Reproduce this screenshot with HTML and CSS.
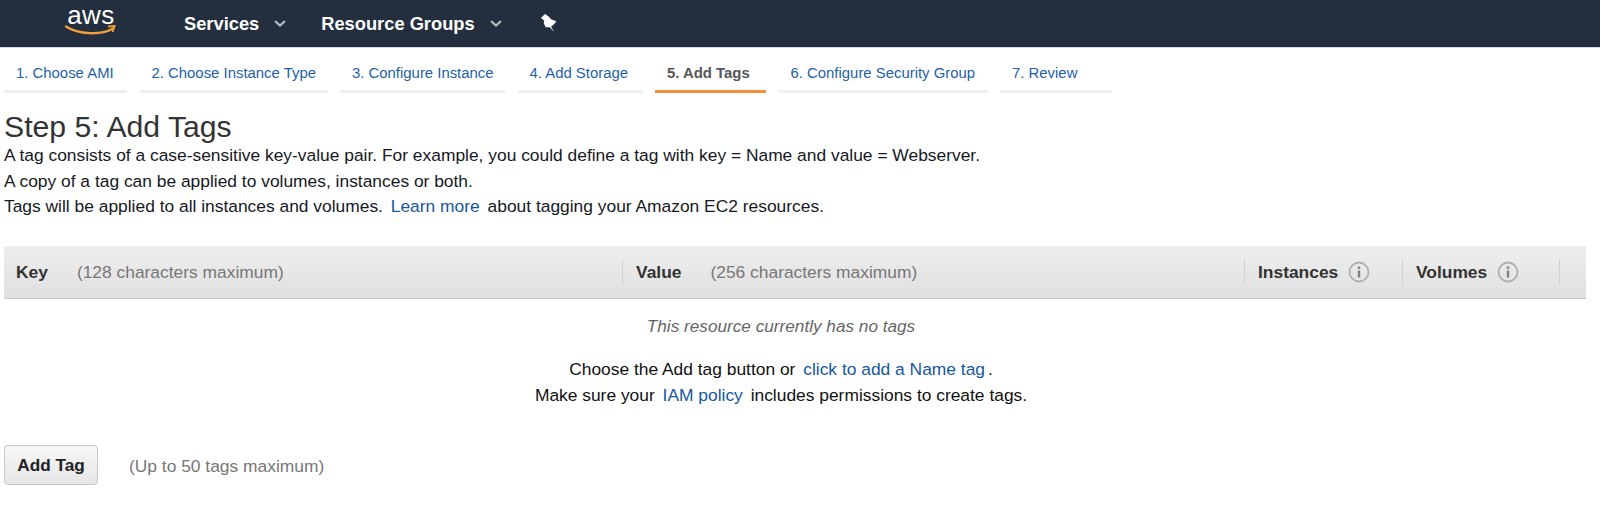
FILE: index.html
```html
<!DOCTYPE html>
<html lang="en">
<head>
<meta charset="utf-8">
<title>Step 5: Add Tags</title>
<link rel="stylesheet" href="styles.css">
</head>
<body>
<header class="topbar">
  <svg class="logo" width="54" height="47" viewBox="0 0 54 47" aria-label="aws">
    <text x="27" y="23.500" text-anchor="middle" class="logo-text">aws</text>
    <path d="M2 26.500C14 34.500 37 35.500 49 28.500" fill="none" stroke="#f19e38" stroke-width="2.400" stroke-linecap="round"/>
    <path d="M44 26.500L50.500 26L48.500 32" fill="none" stroke="#f19e38" stroke-width="2"/>
  </svg>
  <nav class="menu">
    <span class="menu-item">Services<svg class="caret" width="12" height="7" viewBox="0 0 12 7"><path d="M1 1L6 5.500L11 1" fill="none" stroke="#b9bdc3" stroke-width="2.200"/></svg></span>
    <span class="menu-item wide">Resource Groups<svg class="caret" width="12" height="7" viewBox="0 0 12 7"><path d="M1 1L6 5.500L11 1" fill="none" stroke="#b9bdc3" stroke-width="2.200"/></svg></span>
    <svg class="pin" width="16" height="18" viewBox="0 0 16 18"><path d="M4 0L8 2.700L10 5.300L15.300 7.300L13.300 10L10 12.700L13.300 18L8.700 13.300L4.700 13.300L2.700 9.300L3.300 6.700L0 4Z" fill="#fff"/></svg>
  </nav>
</header>
<nav class="tabs">
  <a class="tab t1">1. Choose AMI</a>
  <a class="tab t2">2. Choose Instance Type</a>
  <a class="tab t3">3. Configure Instance</a>
  <a class="tab t4">4. Add Storage</a>
  <a class="tab t5 active">5. Add Tags</a>
  <a class="tab t6">6. Configure Security Group</a>
  <a class="tab t7">7. Review</a>
</nav>
<main class="content">
  <h1>Step 5: Add Tags</h1>
  <p>A tag consists of a case-sensitive key-value pair. For example, you could define a tag with key = Name and value = Webserver.</p>
  <p>A copy of a tag can be applied to volumes, instances or both.</p>
  <p>Tags will be applied to all instances and volumes. <a class="link">Learn more</a> about tagging your Amazon EC2 resources.</p>
  <div class="table-head">
    <div class="col col-key"><b>Key</b><span class="hint">(128 characters maximum)</span></div>
    <div class="col col-value"><b>Value</b><span class="hint">(256 characters maximum)</span></div>
    <div class="col col-inst"><b>Instances</b><svg class="info" width="22" height="22" viewBox="0 0 22 22"><circle cx="11" cy="11" r="9.500" fill="none" stroke="#b0b0b0" stroke-width="1.800"/><rect x="9.800" y="9.500" width="2.400" height="7" fill="#808080"/><rect x="9.800" y="5.500" width="2.400" height="2.400" fill="#808080"/></svg></div>
    <div class="col col-vol"><b>Volumes</b><svg class="info" width="22" height="22" viewBox="0 0 22 22"><circle cx="11" cy="11" r="9.500" fill="none" stroke="#b0b0b0" stroke-width="1.800"/><rect x="9.800" y="9.500" width="2.400" height="7" fill="#808080"/><rect x="9.800" y="5.500" width="2.400" height="2.400" fill="#808080"/></svg></div>
  </div>
  <div class="empty">
    <p class="none">This resource currently has no tags</p>
    <p>Choose the Add tag button or <a class="link">click to add a Name tag</a>.</p>
    <p>Make sure your <a class="link">IAM policy</a> includes permissions to create tags.</p>
  </div>
  <div class="actions">
    <button class="btn" type="button">Add Tag</button>
    <span class="limit">(Up to 50 tags maximum)</span>
  </div>
</main>
</body>
</html>
```
FILE: styles.css
```css
* { box-sizing: border-box; }
html, body { margin: 0; padding: 0; }
body {
  font-family: "Liberation Sans", Arial, sans-serif;
  font-size: 17.400px;
  color: #16191f;
  background: #fff;
  height: 525px;
  overflow: hidden;
}
.topbar {
  height: 48px;
  background: #232f3e;
  border-bottom: 1px solid #d5d7da;
  display: flex;
  align-items: center;
  padding-left: 64px;
}
.logo { display: block; }
.logo-text { font: 400 26px "Liberation Sans", sans-serif; letter-spacing: .5px; fill: #fff; }
.menu {
  display: flex;
  align-items: center;
  margin-left: 66px;
  color: #fff;
  font-weight: 700;
  font-size: 18.300px;
}
.menu-item { display: flex; align-items: center; margin-right: 35px; }
.menu-item.wide { margin-right: 39px; }
.caret { margin-left: 15px; }
.pin { display: block; margin-top: -2px; }
.tabs {
  display: flex;
  gap: 12.500px;
  padding: 0 0 0 4px;
  height: 45px;
}
.tab {
  display: block;
  height: 45px;
  padding: 16px 12px 0;
  font-size: 14.900px;
  color: #1f5fa8;
  border-bottom: 3px solid #eeeeee;
  white-space: nowrap;
  line-height: 18px;
}
.t1 { width: 123px; }
.t2 { width: 188px; }
.t3 { width: 165px; }
.t4 { width: 125px; }
.t5 { width: 111px; }
.t6 { width: 209px; }
.t7 { width: 112px; }
.tab.active {
  color: #555;
  font-weight: 700;
  border-bottom-color: #f58d3b;
}
.content { padding: 0 0 0 4px; }
h1 {
  margin: 17px 0 0;
  font-weight: 400;
  font-size: 30.200px;
  line-height: 33px;
  color: #333;
}
p { margin: 0; line-height: 25.500px; }
.link { color: #15589e; margin: 0 3px; }
.table-head {
  margin-top: 26px;
  margin-right: 14px;
  height: 53px;
  padding-top: 1px;
  background: linear-gradient(#eeeeee, #e0e0e0);
  border-bottom: 1px solid #c6c6c6;
  display: flex;
  align-items: center;
  color: #333;
}
.col {
  height: 26px;
  display: flex;
  align-items: center;
  padding-left: 13px;
  border-right: 1px solid #d2d2d2;
}
.col-key { width: 619px; padding-left: 12px; }
.col-value { width: 622px; }
.col-inst { width: 158px; }
.col-vol { width: 157px; }
.col b { font-weight: 700; }
.hint { color: #777; margin-left: 29px; }
.info { margin-left: 10px; }
.empty { text-align: center; margin-top: 15px; padding-right: 42px; color: #111; }
.empty .none { font-style: italic; font-size: 17.200px; color: #666; margin-bottom: 18px; }
.actions { display: flex; align-items: center; margin-top: 37px; }
.btn {
  width: 94px;
  height: 40px;
  font: 700 17.200px "Liberation Sans", Arial, sans-serif;
  color: #222;
  background: linear-gradient(#f7f7f7, #e6e6e6);
  border: 1px solid #c8c8c8;
  border-radius: 4px;
  padding: 1px 0 0;
}
.limit { color: #777; margin-left: 31px; padding-top: 2px; }
```
